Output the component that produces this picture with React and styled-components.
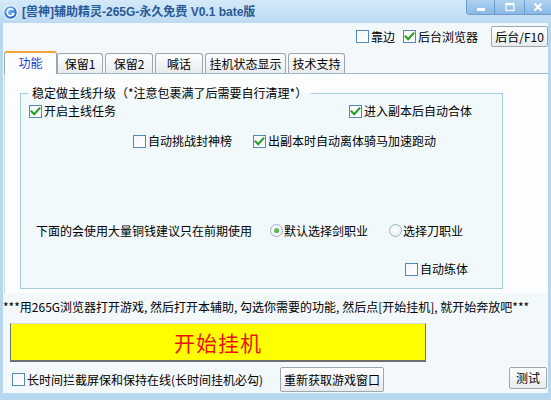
import React from "react";
import styled, { createGlobalStyle, css } from "styled-components";

const GlobalStyle = createGlobalStyle`
  html, body { margin: 0; padding: 0; background: #ffffff; }
  body {
    font-family: "Noto Sans CJK SC", "Noto Sans", sans-serif;
    font-size: 12px;
    color: #000;
  }
  * { box-sizing: border-box; }
`;

const Window = styled.div`
  width: 551px;
  height: 400px;
  display: flex;
  flex-direction: column;
  background: #b7d6ef;
  padding-bottom: 7px;
  overflow: hidden;
`;

const TitleBar = styled.div`
  height: 23px;
  flex: none;
  display: flex;
  align-items: flex-start;
  background: linear-gradient(#d4e9f9, #bcdaf2);
`;

const TitleLeft = styled.div`
  flex: 1;
  display: flex;
  align-items: center;
  gap: 4px;
  padding: 5px 0 0 3px;
`;

const TitleText = styled.span`
  font-family: "Liberation Sans", "Noto Sans CJK SC", sans-serif;
  font-weight: bold;
  font-size: 12px;
  line-height: 15px;
  color: #2b5a96;
  white-space: nowrap;
`;

const CaptionButtons = styled.div`
  display: flex;
  height: 15px;
  border: 1px solid #6d9ccc;
  border-top: none;
  border-right: none;
  border-radius: 0 0 0 4px;
  overflow: hidden;
`;

const CaptionButton = styled.div`
  width: ${(p) => p.$w}px;
  height: 100%;
  display: flex;
  align-items: center;
  justify-content: center;
  background: linear-gradient(#b0d2f1, #88b8e5);
  & + & {
    border-left: 1px solid #6d9ccc;
  }
`;

const Client = styled.div`
  flex: 1;
  margin: 0 3px;
  background: #f3f8fb;
  display: flex;
  flex-direction: column;
`;

const Line = styled.div`
  display: grid;
  grid-auto-flow: column;
  grid-template-columns: ${(p) => p.$cols};
  align-items: center;
  padding-left: ${(p) => p.$pl || 0}px;
  padding-right: ${(p) => p.$pr || 0}px;
  margin-top: ${(p) => p.$mt || 0}px;
  height: ${(p) => p.$h || 14}px;
  white-space: nowrap;
`;

const Button = styled.div`
  width: ${(p) => p.$w}px;
  height: ${(p) => p.$h}px;
  align-self: start;
  justify-self: ${(p) => p.$end ? "end" : "start"};
  display: flex;
  align-items: center;
  justify-content: center;
  border: 1px solid #9ea6ae;
  border-radius: 2px;
  background: linear-gradient(#ffffff, #e8eaec);
  font-size: 12px;
  line-height: 14px;
`;

const TabStrip = styled.div`
  margin-top: 4px;
  height: 22px;
  display: flex;
  align-items: flex-end;
  padding-left: 1px;
`;

const Tab = styled.div`
  width: ${(p) => p.$w}px;
  height: 20px;
  margin-right: 2px;
  display: flex;
  align-items: center;
  justify-content: center;
  border: 1px solid #9aa6b2;
  border-bottom: none;
  border-radius: 3px 3px 0 0;
  background: linear-gradient(#ffffff, #e8eaed);
  line-height: 14px;
  ${(p) =>
    p.$active &&
    css`
      position: relative;
      z-index: 1;
      height: 23px;
      margin-right: 0;
      margin-bottom: -1px;
      padding-bottom: 1px;
      border-top: 2px solid #f0a43a;
      background: #fcfdfe;
      color: #1d3fcf;
    `}
`;

const Panel = styled.div`
  height: 220px;
  margin-left: 1px;
  border-top: 1px solid #9fb7cb;
  border-left: 1px solid #c7d8e6;
  background: #fcfdfe;
  padding: 12px 0 0 15px;
`;

const GroupBox = styled.fieldset`
  width: 483px;
  margin: 0;
  padding: 0 0 12px 0;
  min-inline-size: 0;
  border: 1px solid #a4cde1;
  background: #f2f9fb;
`;

const Legend = styled.legend`
  margin-left: 7px;
  padding: 0 4px;
  font-size: 12px;
  line-height: 14px;
  white-space: nowrap;
`;

const CheckLabel = styled.div`
  display: flex;
  align-items: center;
  gap: ${(p) => p.$gap}px;
  line-height: 14px;
  white-space: nowrap;
`;

const Box = styled.span`
  width: 13px;
  height: 13px;
  flex: none;
  display: flex;
  align-items: center;
  justify-content: center;
  border: 1px solid #5587b9;
  background: linear-gradient(135deg, #f4f6f8, #ffffff);
`;

const RadioDot = styled.span`
  width: 13px;
  height: 13px;
  flex: none;
  display: flex;
  align-items: center;
  justify-content: center;
  border: 1px solid #9db3c7;
  border-radius: 50%;
  background: radial-gradient(circle at 40% 40%, #ffffff, #e4ebf1);
  &::after {
    content: "";
    width: 5px;
    height: 5px;
    border-radius: 50%;
    background: radial-gradient(circle at 40% 35%, #7ed36a, #2b8c21);
    display: ${(p) => (p.$on ? "block" : "none")};
  }
`;

const Footer = styled.div`
  height: 30px;
  padding-top: 7px;
  line-height: 14px;
  white-space: nowrap;
  letter-spacing: 0;
`;

const StartButton = styled.div`
  margin-left: 7px;
  width: 416px;
  height: 39px;
  flex: none;
  display: flex;
  align-items: center;
  justify-content: center;
  background: #ffff00;
  border: 1px solid #6f6f6f;
  border-top-color: #d9d9d9;
  border-bottom-width: 2px;
  color: #ee1111;
  font-size: 21px;
  line-height: 24px;
  letter-spacing: 1px;
`;

const Check = ({ on, children }) => (
  <CheckLabel $gap={2}>
    <Box>
      {on && (
        <svg width="11" height="11" viewBox="0 0 11 11">
          <path d="M1.6 5.6 L4.2 8.2 L9.4 2.4" fill="none" stroke="#22a122" strokeWidth="2.1" strokeLinecap="square" />
        </svg>
      )}
    </Box>
    <span>{children}</span>
  </CheckLabel>
);

const Radio = ({ on, children }) => (
  <CheckLabel $gap={1}>
    <RadioDot $on={on} />
    <span>{children}</span>
  </CheckLabel>
);

const AppIcon = () => (
  <svg width="15" height="15" viewBox="0 0 15 15">
    <defs>
      <radialGradient id="ig" cx="40%" cy="35%" r="70%">
        <stop offset="0" stopColor="#7cc0ff" />
        <stop offset="1" stopColor="#1857bd" />
      </radialGradient>
    </defs>
    <circle cx="7.5" cy="7.5" r="6.8" fill="url(#ig)" stroke="#eaf4fc" strokeWidth="1.2" />
    <path d="M10.4 5.1 A3.5 3.5 0 1 0 10.9 8.6" fill="none" stroke="#ffffff" strokeWidth="1.6" />
    <path d="M8.2 8.2 L11.6 7.6 L11 10.6 Z" fill="#ffffff" />
  </svg>
);

const tabs = [
  { label: "功能", w: 53, active: true },
  { label: "保留1", w: 46 },
  { label: "保留2", w: 48 },
  { label: "喊话", w: 48 },
  { label: "挂机状态显示", w: 81 },
  { label: "技术支持", w: 57 },
];

export default function App() {
  return (
    <>
      <GlobalStyle />
      <Window>
        <TitleBar>
          <TitleLeft>
            <AppIcon />
            <TitleText>[兽神]辅助精灵-265G-永久免费 V0.1 bate版</TitleText>
          </TitleLeft>
          <CaptionButtons>
            <CaptionButton $w={27}>
              <svg width="10" height="10" viewBox="0 0 10 10">
                <rect x="1" y="6" width="8" height="3" fill="#fff" />
              </svg>
            </CaptionButton>
            <CaptionButton $w={30}>
              <svg width="10" height="10" viewBox="0 0 10 10">
                <rect x="1" y="1.5" width="8" height="7" fill="none" stroke="#fff" strokeWidth="1.2" />
                <rect x="1" y="1" width="8" height="2.2" fill="#fff" />
              </svg>
            </CaptionButton>
            <CaptionButton $w={27}>
              <svg width="10" height="10" viewBox="0 0 10 10">
                <path d="M1.5 1.5 L8.5 8.5 M8.5 1.5 L1.5 8.5" stroke="#fff" strokeWidth="2.2" />
              </svg>
            </CaptionButton>
          </CaptionButtons>
        </TitleBar>

        <Client>
          <Line $mt={3} $h={21} $pl={353} $cols="47px 88px 57px">
            <Check>靠边</Check>
            <Check on>后台浏览器</Check>
            <Button $w={57} $h={21}>后台/F10</Button>
          </Line>

          <TabStrip>
            {tabs.map((t) => (
              <Tab key={t.label} $w={t.w} $active={t.active}>
                {t.label}
              </Tab>
            ))}
          </TabStrip>

          <Panel>
            <GroupBox>
              <Legend>稳定做主线升级（*注意包裹满了后需要自行清理*）</Legend>
              <Line $mt={4} $pl={8} $cols="320px auto">
                <Check on>开启主线任务</Check>
                <Check on>进入副本后自动合体</Check>
              </Line>
              <Line $mt={16} $pl={112} $cols="120px auto">
                <Check>自动挑战封神榜</Check>
                <Check on>出副本时自动离体骑马加速跑动</Check>
              </Line>
              <Line $mt={74} $pl={15} $cols="234px 119px auto">
                <span>下面的会使用大量铜钱建议只在前期使用</span>
                <Radio on>默认选择剑职业</Radio>
                <Radio>选择刀职业</Radio>
              </Line>
              <Line $mt={26} $pl={384} $cols="auto">
                <Check>自动练体</Check>
              </Line>
            </GroupBox>
          </Panel>

          <Footer>***用265G浏览器打开游戏, 然后打开本辅助, 勾选你需要的功能, 然后点[开始挂机], 就开始奔放吧***</Footer>

          <StartButton>开始挂机</StartButton>

          <Line $mt={5} $h={25} $pl={9} $pr={1} $cols="268px 104px 1fr 38px">
            <Check>长时间拦截屏保和保持在线(长时间挂机必勾)</Check>
            <Button $w={104} $h={25}>重新获取游戏窗口</Button>
            <span />
            <Button $w={38} $h={22} $end>测试</Button>
          </Line>
        </Client>
      </Window>
    </>
  );
}
